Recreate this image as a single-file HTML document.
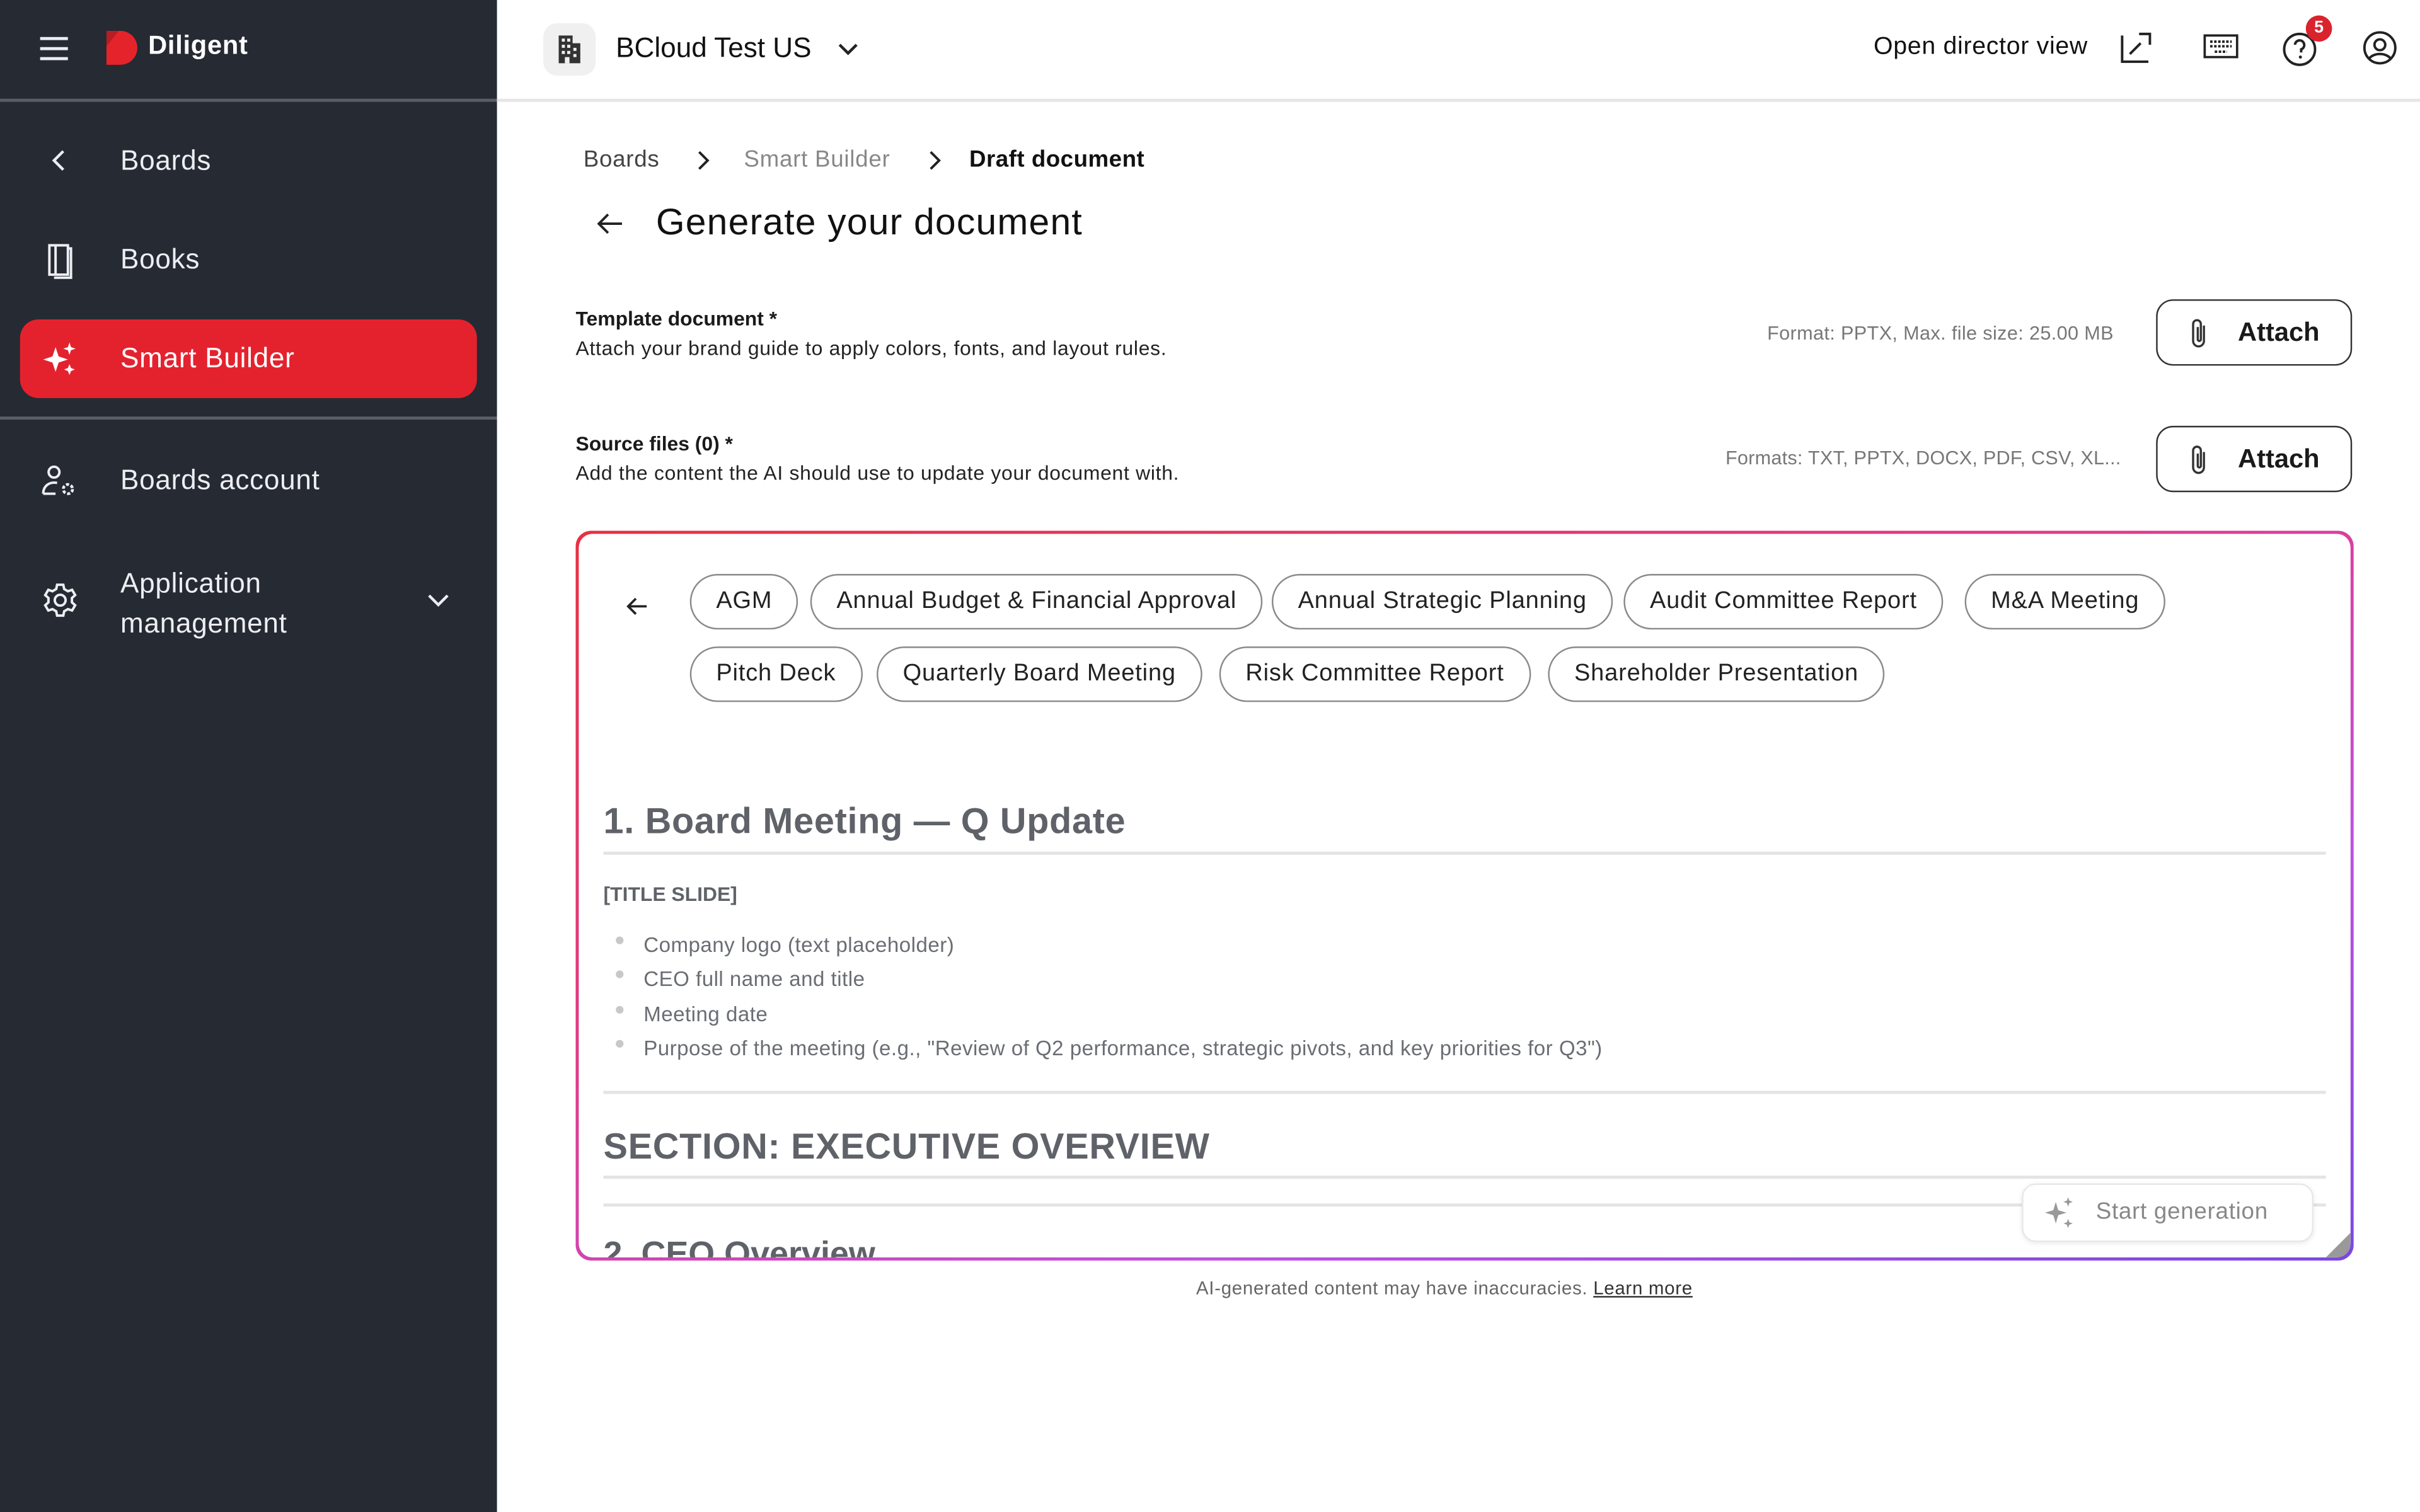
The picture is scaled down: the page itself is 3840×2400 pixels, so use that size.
<!DOCTYPE html>
<html><head><meta charset="utf-8"><style>
html,body{margin:0;padding:0;width:3840px;height:2400px;overflow:hidden;background:#fff}
#s{position:absolute;left:0;top:0;width:1568px;height:980px;transform:scale(2.44898);transform-origin:0 0;font-family:"Liberation Sans",sans-serif;color:#1a1a1a}
.a{position:absolute;white-space:nowrap}
.side{position:absolute;left:0;top:0;width:322px;height:980px;background:#262a33}
.side .t{color:#eceef2;font-size:18px;letter-spacing:0.3px}
.hl{position:absolute;left:0;width:322px;height:2px;background:#5a5e66}
.chip{position:absolute;height:36px;border:1.3px solid #8a8a8a;border-radius:19px;box-sizing:border-box;font-size:15.5px;line-height:34px;padding:0 16px;color:#222;letter-spacing:0.35px}
.btn{position:absolute;width:127px;height:43px;border:1.3px solid #333;border-radius:11px;box-sizing:border-box;font-size:17px;font-weight:bold;line-height:41px}
.li{position:absolute;left:417px;font-size:13.5px;color:#6a6d73;letter-spacing:0.2px}
.dot{position:absolute;left:399px;width:5px;height:5px;border-radius:50%;background:#c8c8c8}
.rule{position:absolute;left:391px;width:1116px;height:2px;background:#e4e4e4}
.h2{position:absolute;left:391px;font-size:23.5px;font-weight:bold;color:#5f6268;white-space:nowrap;letter-spacing:0.3px}
</style></head><body><div id="s">
<div class="side">
  <svg class="a" style="left:24px;top:23px" width="22" height="17" viewBox="0 0 22 17"><path d="M2 2h18M2 8.5h18M2 15h18" stroke="#eceef2" stroke-width="2"/></svg>
  <svg class="a" style="left:68px;top:19px" width="22" height="24" viewBox="0 0 22 24"><path d="M1 1h9a11 11 0 0 1 0 22H1z" fill="#e5232b"/><path d="M1 1h8l-8 10z" fill="#b81d24"/></svg>
  <div class="a t" style="left:96px;top:20px;font-weight:bold;font-size:17px;color:#fff">Diligent</div>
  <div class="hl" style="top:64px"></div>
  <svg class="a" style="left:32px;top:96px" width="12" height="16" viewBox="0 0 12 16"><path d="M9 2L3 8l6 6" stroke="#eceef2" stroke-width="1.8" fill="none"/></svg>
  <div class="a t" style="left:78px;top:94px">Boards</div>
  <svg class="a" style="left:28px;top:157px" width="22" height="24" viewBox="0 0 22 24"><path d="M4 2h12v19H4zM8 2v19M16 4h2v19H7" stroke="#eceef2" stroke-width="1.6" fill="none"/></svg>
  <div class="a t" style="left:78px;top:158px">Books</div>
  <div class="a" style="left:13px;top:207px;width:296px;height:51px;background:#e4222e;border-radius:12px"></div>
  <svg class="a" style="left:27px;top:221px" width="24" height="24" viewBox="0 0 24 24"><path d="M9 4l2 6 6 2-6 2-2 6-2-6-6-2 6-2z M18 1l1 3 3 1-3 1-1 3-1-3-3-1 3-1z M18 15l1 2.5 2.5 1-2.5 1-1 2.5-1-2.5-2.5-1 2.5-1z" fill="#fff"/></svg>
  <div class="a t" style="left:78px;top:222px;color:#fff">Smart Builder</div>
  <div class="hl" style="top:270px"></div>
  <svg class="a" style="left:26px;top:300px" width="26" height="24" viewBox="0 0 26 24"><circle cx="9" cy="6" r="3.5" stroke="#eceef2" stroke-width="1.6" fill="none"/><path d="M2 20c0-5 4-8 9-7" stroke="#eceef2" stroke-width="1.6" fill="none"/><path d="M2 20h8" stroke="#eceef2" stroke-width="1.6"/><circle cx="18" cy="17" r="3" stroke="#eceef2" stroke-width="1.8" fill="none" stroke-dasharray="2 1.2"/></svg>
  <div class="a t" style="left:78px;top:301px">Boards account</div>
  <svg class="a" style="left:27px;top:377px" width="24" height="24" viewBox="0 0 24 24"><circle cx="12" cy="12" r="3.5" stroke="#eceef2" stroke-width="1.6" fill="none"/><path d="M10 2h4l.6 2.8 2.4 1.4 2.7-.9 2 3.4-2.1 1.9v2.8l2.1 1.9-2 3.4-2.7-.9-2.4 1.4L14 22h-4l-.6-2.8-2.4-1.4-2.7.9-2-3.4 2.1-1.9v-2.8L2.3 8.7l2-3.4 2.7.9 2.4-1.4z" stroke="#eceef2" stroke-width="1.6" fill="none"/></svg>
  <div class="a t" style="left:78px;top:365px;line-height:26px">Application<br>management</div>
  <svg class="a" style="left:276px;top:383px" width="16" height="12" viewBox="0 0 16 12"><path d="M2 3l6 6 6-6" stroke="#eceef2" stroke-width="1.8" fill="none"/></svg>
</div>
<div class="a" style="left:322px;top:64px;width:1246px;height:1.5px;background:#e6e6e6"></div>
<div class="a" style="left:352px;top:15px;width:34px;height:34px;border-radius:9px;background:#f0f0f0"></div>
<svg class="a" style="left:359px;top:21px" width="20" height="21" viewBox="0 0 20 21"><path d="M3 20V2h9v5h5v13z" fill="#333"/><g fill="#f0f0f0"><rect x="5" y="4" width="2" height="2"/><rect x="8.5" y="4" width="2" height="2"/><rect x="5" y="8" width="2" height="2"/><rect x="8.5" y="8" width="2" height="2"/><rect x="12.5" y="10" width="2" height="2"/><rect x="5" y="12" width="2" height="2"/><rect x="8.5" y="12" width="2" height="2"/><rect x="12.5" y="14" width="2" height="2"/><rect x="7" y="16" width="3" height="4"/></g></svg>
<div class="a" style="left:399px;top:21px;font-size:18px;color:#111">BCloud Test US</div>
<svg class="a" style="left:542px;top:26px" width="15" height="12" viewBox="0 0 15 12"><path d="M2 3l5.5 5.5L13 3" stroke="#222" stroke-width="1.8" fill="none"/></svg>
<div class="a" style="left:1214px;top:22px;font-size:16px;color:#111;letter-spacing:0.3px">Open director view</div>
<svg class="a" style="left:1372px;top:19px" width="24" height="24" viewBox="0 0 24 24"><path d="M3 4v17h17M14 3h7v7M8 16l7-7" stroke="#222" stroke-width="1.6" fill="none"/></svg>
<svg class="a" style="left:1427px;top:21px" width="24" height="18" viewBox="0 0 24 18"><rect x="1.5" y="2" width="21" height="14" stroke="#222" stroke-width="1.5" fill="none"/><path d="M5 6h14M5 9h14M8 12.5h8" stroke="#222" stroke-width="1.6" stroke-dasharray="1.6 1"/></svg>
<svg class="a" style="left:1478px;top:19px" width="26" height="26" viewBox="0 0 26 26"><circle cx="12" cy="13" r="10" stroke="#222" stroke-width="1.6" fill="none"/><path d="M9 10a3 3 0 1 1 4 3v2" stroke="#222" stroke-width="1.6" fill="none"/><circle cx="12.5" cy="18" r="1" fill="#222"/></svg>
<div class="a" style="left:1494px;top:10px;width:17px;height:17px;border-radius:50%;background:#d9232d;color:#fff;font-size:11px;font-weight:bold;text-align:center;line-height:17px">5</div>
<svg class="a" style="left:1530px;top:19px" width="24" height="24" viewBox="0 0 24 24"><circle cx="12" cy="12" r="10" stroke="#222" stroke-width="1.6" fill="none"/><circle cx="12" cy="10" r="3.5" stroke="#222" stroke-width="1.6" fill="none"/><path d="M5 19c3-4 11-4 14 0" stroke="#222" stroke-width="1.6" fill="none"/></svg>
<div class="a" style="left:378px;top:95px;font-size:15px;color:#444;letter-spacing:0.3px">Boards</div>
<svg class="a" style="left:450px;top:97px" width="12" height="14" viewBox="0 0 12 14"><path d="M3 1.5l5.5 5.5L3 12.5" stroke="#222" stroke-width="1.6" fill="none"/></svg>
<div class="a" style="left:482px;top:95px;font-size:15px;color:#888;letter-spacing:0.3px">Smart Builder</div>
<svg class="a" style="left:600px;top:97px" width="12" height="14" viewBox="0 0 12 14"><path d="M3 1.5l5.5 5.5L3 12.5" stroke="#222" stroke-width="1.6" fill="none"/></svg>
<div class="a" style="left:628px;top:95px;font-size:15px;font-weight:bold;color:#111;letter-spacing:0.2px">Draft document</div>
<svg class="a" style="left:385px;top:136px" width="20" height="18" viewBox="0 0 20 18"><path d="M18 9H3M9 3L3 9l6 6" stroke="#222" stroke-width="1.6" fill="none"/></svg>
<div class="a" style="left:425px;top:131px;font-size:24px;color:#111;letter-spacing:0.5px">Generate your document</div>
<div class="a" style="left:373px;top:199px;font-size:13px;font-weight:bold">Template document *</div>
<div class="a" style="left:373px;top:218px;font-size:13px;color:#222;letter-spacing:0.3px">Attach your brand guide to apply colors, fonts, and layout rules.</div>
<div class="a" style="left:1145px;top:209px;font-size:12.5px;color:#777;letter-spacing:0.15px">Format: PPTX, Max. file size: 25.00 MB</div>
<div class="btn" style="left:1397px;top:194px"><svg class="a" style="left:20px;top:10px" width="14" height="22" viewBox="0 0 14 22"><path d="M10 6v10a3.5 3.5 0 0 1-7 0V5a2.5 2.5 0 0 1 5 0v10a1 1 0 0 1-2 0V7" stroke="#333" stroke-width="1.4" fill="none"/></svg><span class="a" style="left:52px;top:0">Attach</span></div>
<div class="a" style="left:373px;top:280px;font-size:13px;font-weight:bold">Source files (0) *</div>
<div class="a" style="left:373px;top:299px;font-size:13px;color:#222;letter-spacing:0.3px">Add the content the AI should use to update your document with.</div>
<div class="a" style="left:1118px;top:290px;font-size:12.5px;color:#777;letter-spacing:0.1px">Formats: TXT, PPTX, DOCX, PDF, CSV, XL...</div>
<div class="btn" style="left:1397px;top:276px"><svg class="a" style="left:20px;top:10px" width="14" height="22" viewBox="0 0 14 22"><path d="M10 6v10a3.5 3.5 0 0 1-7 0V5a2.5 2.5 0 0 1 5 0v10a1 1 0 0 1-2 0V7" stroke="#333" stroke-width="1.4" fill="none"/></svg><span class="a" style="left:52px;top:0">Attach</span></div>
<div class="a" style="left:373px;top:344px;width:1152px;height:473px;border-radius:10px;background:linear-gradient(160deg,#e8303f 0%,#e03a8a 40%,#c050e0 70%,#7a48e0 100%)"></div>
<div class="a" style="left:375px;top:346px;width:1148px;height:469px;border-radius:9px;background:#fff;overflow:hidden">
  <svg class="a" style="left:30px;top:40px" width="16" height="14" viewBox="0 0 16 14"><path d="M14 7H2M7 2L2 7l5 5" stroke="#222" stroke-width="1.5" fill="none"/></svg>
  <svg class="a" style="left:1132px;top:453px" width="16" height="16" viewBox="0 0 16 16"><path d="M16 0V16H0z" fill="#999"/></svg>
</div>
<div class="chip" style="left:447px;top:372px">AGM</div>
<div class="chip" style="left:525px;top:372px">Annual Budget &amp; Financial Approval</div>
<div class="chip" style="left:824px;top:372px">Annual Strategic Planning</div>
<div class="chip" style="left:1052px;top:372px">Audit Committee Report</div>
<div class="chip" style="left:1273px;top:372px">M&amp;A Meeting</div>
<div class="chip" style="left:447px;top:419px">Pitch Deck</div>
<div class="chip" style="left:568px;top:419px">Quarterly Board Meeting</div>
<div class="chip" style="left:790px;top:419px">Risk Committee Report</div>
<div class="chip" style="left:1003px;top:419px">Shareholder Presentation</div>
<div class="h2" style="top:519px">1. Board Meeting — Q Update</div>
<div class="rule" style="top:552px"></div>
<div class="a" style="left:391px;top:572px;font-size:13px;font-weight:bold;color:#5f6268">[TITLE SLIDE]</div>
<div class="dot" style="top:607px"></div><div class="li" style="top:605px">Company logo (text placeholder)</div>
<div class="dot" style="top:629px"></div><div class="li" style="top:627px">CEO full name and title</div>
<div class="dot" style="top:652px"></div><div class="li" style="top:650px">Meeting date</div>
<div class="dot" style="top:674px"></div><div class="li" style="top:672px">Purpose of the meeting (e.g., "Review of Q2 performance, strategic pivots, and key priorities for Q3")</div>
<div class="rule" style="top:707px"></div>
<div class="h2" style="top:730px">SECTION: EXECUTIVE OVERVIEW</div>
<div class="rule" style="top:762px"></div>
<div class="rule" style="top:780px"></div>
<div class="a" style="left:391px;top:799px;width:300px;height:16px;overflow:hidden"><div style="font-size:22px;font-weight:bold;color:#5f6268;line-height:28px">2. CEO Overview</div></div>
<div class="a" style="left:1310px;top:767px;width:187px;height:36px;border:1px solid #e8e8e8;border-radius:9px;background:#fff;box-shadow:0 1px 3px rgba(0,0,0,.08)"></div>
<svg class="a" style="left:1324px;top:775px" width="22" height="22" viewBox="0 0 22 22"><path d="M8 4l1.6 5.4L15 11l-5.4 1.6L8 18l-1.6-5.4L1 11l5.4-1.6z M16 1l.8 2.2L19 4l-2.2.8L16 7l-.8-2.2L13 4l2.2-.8z M16 15l.8 2.2L19 18l-2.2.8L16 21l-.8-2.2L13 18l2.2-.8z" fill="#999"/></svg>
<div class="a" style="left:1358px;top:777px;font-size:15px;color:#888;letter-spacing:0.3px">Start generation</div>
<div class="a" style="left:775px;top:828px;font-size:12px;color:#666;letter-spacing:0.3px">AI-generated content may have inaccuracies. <span style="text-decoration:underline;color:#333">Learn more</span></div>
</div></body></html>
